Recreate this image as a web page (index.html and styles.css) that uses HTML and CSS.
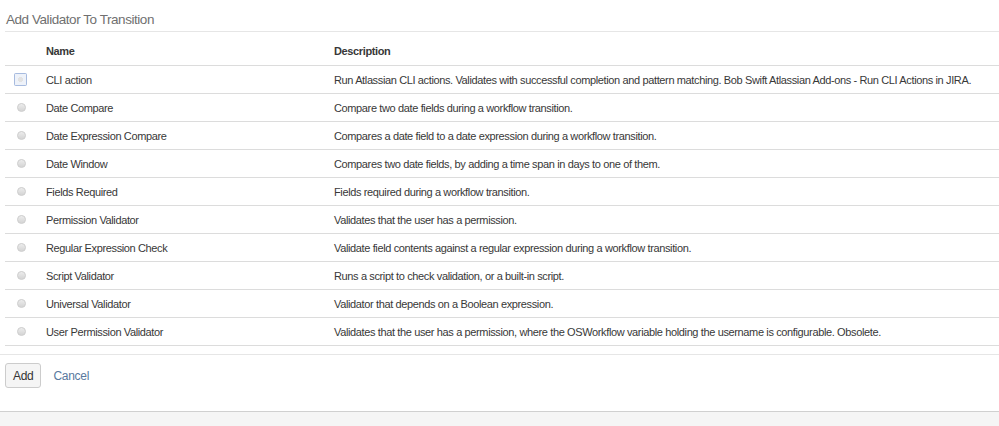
FILE: index.html
```html
<!DOCTYPE html>
<html lang="en">
<head>
  <meta charset="UTF-8" />
  <title>Add Validator To Transition</title>
  <link rel="stylesheet" href="styles.css">
</head>
<body>

<div class="page">
  <h2 class="page-title">Add Validator To Transition</h2>

  <form class="validator-form">
    <table class="validators">
      <thead>
        <tr>
          <th class="col-radio"></th>
          <th class="col-name">Name</th>
          <th>Description</th>
        </tr>
      </thead>
      <tbody>
        <tr>
          <td class="col-radio"><span class="radio focused"></span></td>
          <td>CLI action</td>
          <td>Run Atlassian CLI actions. Validates with successful completion and pattern matching. Bob Swift Atlassian Add-ons - Run CLI Actions in JIRA.</td>
        </tr>
        <tr>
          <td class="col-radio"><span class="radio"></span></td>
          <td>Date Compare</td>
          <td>Compare two date fields during a workflow transition.</td>
        </tr>
        <tr>
          <td class="col-radio"><span class="radio"></span></td>
          <td>Date Expression Compare</td>
          <td>Compares a date field to a date expression during a workflow transition.</td>
        </tr>
        <tr>
          <td class="col-radio"><span class="radio"></span></td>
          <td>Date Window</td>
          <td>Compares two date fields, by adding a time span in days to one of them.</td>
        </tr>
        <tr>
          <td class="col-radio"><span class="radio"></span></td>
          <td>Fields Required</td>
          <td>Fields required during a workflow transition.</td>
        </tr>
        <tr>
          <td class="col-radio"><span class="radio"></span></td>
          <td>Permission Validator</td>
          <td>Validates that the user has a permission.</td>
        </tr>
        <tr>
          <td class="col-radio"><span class="radio"></span></td>
          <td>Regular Expression Check</td>
          <td>Validate field contents against a regular expression during a workflow transition.</td>
        </tr>
        <tr>
          <td class="col-radio"><span class="radio"></span></td>
          <td>Script Validator</td>
          <td>Runs a script to check validation, or a built-in script.</td>
        </tr>
        <tr>
          <td class="col-radio"><span class="radio"></span></td>
          <td>Universal Validator</td>
          <td>Validator that depends on a Boolean expression.</td>
        </tr>
        <tr>
          <td class="col-radio"><span class="radio"></span></td>
          <td>User Permission Validator</td>
          <td>Validates that the user has a permission, where the OSWorkflow variable holding the username is configurable. Obsolete.</td>
        </tr>
      </tbody>
    </table>

    <div class="buttons">
      <button type="submit" class="btn">Add</button>
      <a href="#" class="cancel">Cancel</a>
    </div>
  </form>
</div>

<div class="footer"></div>

</body>
</html>
```

FILE: styles.css
```css
body {
  margin: 0;
  font-family: 'Liberation Sans', Arial, sans-serif;
  font-size: 11px;
  letter-spacing: -0.37px;
  color: #383838;
  background-color: #fff;
}
.page {
  padding: 0 0 0 5px;
}
.page-title {
  margin: 0;
  padding: 12px 0 4px 1px;
  font-size: 13.5px;
  letter-spacing: -0.45px;
  font-weight: normal;
  color: #707070;
  border-bottom: 1px solid #e6e6e6;
}
.validator-form {
  margin: 0;
}
.validators {
  width: 100%;
  border-collapse: collapse;
  border-bottom: 1px solid #dcdcdc;
}
.validators th {
  text-align: left;
  font-weight: bold;
  height: 29px;
  padding: 4px 0 0;
  border-bottom: 1px solid #dcdcdc;
}
.validators td {
  height: 27px;
  padding: 0;
  border-bottom: 1px solid #dcdcdc;
}
.col-radio {
  width: 41px;
}
.validators td.col-radio {
  padding-left: 12px;
  width: 29px;
}
.col-name {
  width: 288px;
}
.radio {
  display: block;
  width: 7px;
  height: 7px;
  border-radius: 50%;
  border: 1px solid #cfcfcf;
  background: linear-gradient(#ececec, #d4d4d4);
}
.radio.focused {
  margin-left: -2px;
  width: 7px;
  height: 7px;
  border: 2px solid #eef2f9;
  box-shadow: 0 0 0 1px #a7bbdf;
  border-radius: 1px;
  background: radial-gradient(circle, #e2e2e2 50%, #eef2f9 55%);
}
.buttons {
  margin-left: -5px;
  padding: 8px 0 23px 5px;
  border-top: 1px solid #e6e6e6;
  margin-top: 8px;
  display: flex;
  align-items: center;
  gap: 12px;
}
.btn {
  font-family: inherit;
  font-size: 12px;
  letter-spacing: -0.3px;
  color: #333;
  background-color: #f5f5f5;
  border: 1px solid #ccc;
  border-radius: 3px;
  height: 25px;
  padding: 0 7px;
}
.cancel {
  font-size: 12px;
  letter-spacing: -0.3px;
  color: #59799e;
  text-decoration: none;
}
.footer {
  height: 20px;
  background-color: #f5f5f5;
  border-top: 1px solid #d0d0d0;
}
```
